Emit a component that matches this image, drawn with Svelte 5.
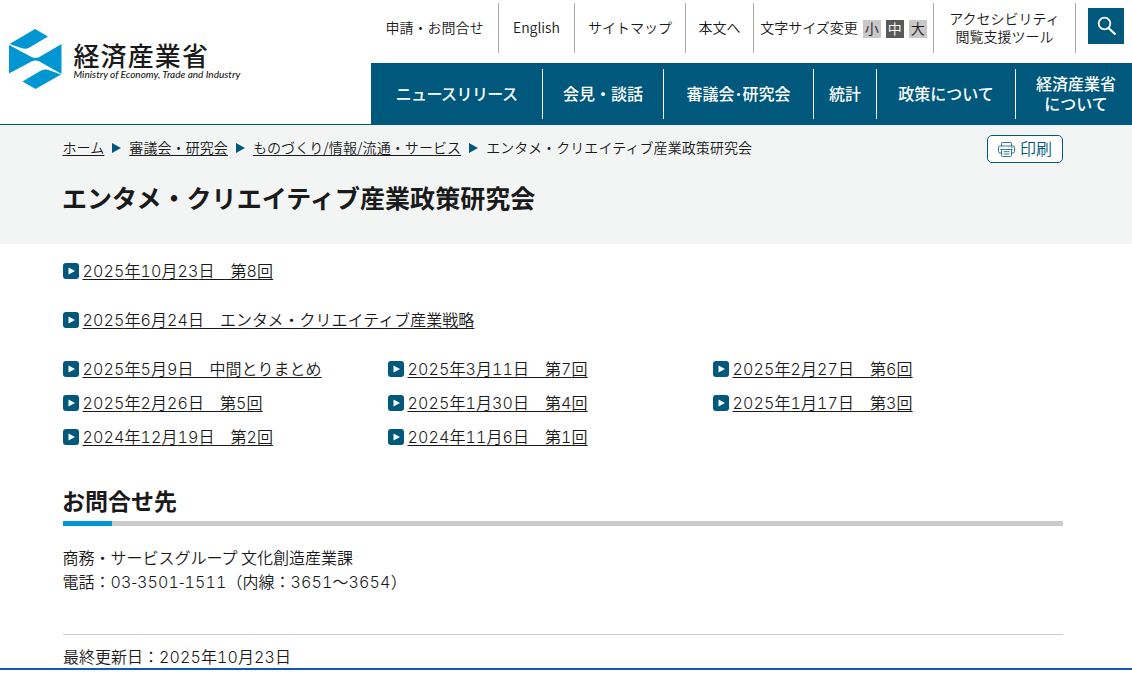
<script>
  const utilityLinks = [
    { label: '申請・お問合せ', width: 127 },
    { label: 'English', width: 75 },
    { label: 'サイトマップ', width: 110 },
    { label: '本文へ', width: 67 }
  ];

  const globalNav = [
    { lines: ['ニュースリリース'], width: 171, tight: true },
    { lines: ['会見・談話'], width: 120 },
    { lines: ['審議会･研究会'], width: 149 },
    { lines: ['統計'], width: 62 },
    { lines: ['政策について'], width: 138 },
    { lines: ['経済産業省', 'について'], width: 120 }
  ];

  const breadcrumbs = ['ホーム', '審議会・研究会', 'ものづくり/情報/流通・サービス'];
  const title = 'エンタメ・クリエイティブ産業政策研究会';

  const meetings = [
    '2025年5月9日　中間とりまとめ',
    '2025年3月11日　第7回',
    '2025年2月27日　第6回',
    '2025年2月26日　第5回',
    '2025年1月30日　第4回',
    '2025年1月17日　第3回',
    '2024年12月19日　第2回',
    '2024年11月6日　第1回'
  ];

  // split a string into digit and non-digit runs
  const runs = (text) => text.split(/(\d+)/).filter((s) => s !== '');
</script>

{#snippet mixed(text)}{#each runs(text) as run}{#if /\d/.test(run)}<span class="num">{run}</span>{:else}{run}{/if}{/each}{/snippet}

{#snippet arrowLink(text)}
  <a class="arrow-link" href="#top">
    <svg width="16" height="16" viewBox="0 0 16 16">
      <rect width="16" height="16" rx="3" fill="#00587c" />
      <path d="M5.500 4.500 12 8l-6.500 3.500z" fill="#fff" />
    </svg>
    <span class="label">{@render mixed(text)}</span>
  </a>
{/snippet}

<div class="page" id="top">
  <header>
    <a class="logo" href="#top">
      <svg width="54" height="61" viewBox="0 0 54 61">
        <g fill="#0096d2">
          <path d="M0.500 15 26 0l13 7.500-18.500 11Q17 20.500 13 19.300z" />
          <path d="M0 16 23 28.200Q26.500 29.500 30 28.200L52.500 15v30L30 32.200Q26.500 30.800 23 32.200L0 44.500z" />
          <path d="M52 45.500 26.500 60 13.500 52.500l18.500-11Q35.500 39.800 39 40.800z" />
        </g>
      </svg>
      <span class="logo-text">
        <span class="logo-ja">経済産業省</span>
        <span class="logo-en">Ministry of Economy, Trade and Industry</span>
      </span>
    </a>
    <div class="header-right">
      <ul class="utility">
        {#each utilityLinks as item}
          <li style="width: {item.width}px">{item.label}</li>
        {/each}
        <li class="text-size">
          文字サイズ変更
          <button>小</button>
          <button class="current">中</button>
          <button>大</button>
        </li>
        <li class="support">アクセシビリティ<br />閲覧支援ツール</li>
        <li class="search">
          <button aria-label="検索">
            <svg width="36" height="36" viewBox="0 0 36 36" fill="none" stroke="#fff">
              <circle cx="16.500" cy="15.500" r="5.800" stroke-width="1.800" />
              <path d="m20.500 20 7 6.500" stroke-width="2.200" />
            </svg>
          </button>
        </li>
      </ul>
      <nav>
        {#each globalNav as item}
          <a href="#top" class:tight={item.tight} style="width: {item.width}px">
            {#each item.lines as line}<span>{line}</span>{/each}
          </a>
        {/each}
      </nav>
    </div>
  </header>

  <div class="title-area">
    <div class="crumb-row">
      <ol>
        {#each breadcrumbs as crumb}
          <li>
            <a href="#top">{crumb}</a>
            <svg width="9" height="10" viewBox="0 0 9 10"><path d="M0 0 9 5 0 10z" fill="#00587c" /></svg>
          </li>
        {/each}
        <li>{title}</li>
      </ol>
      <button class="print">
        <svg width="17" height="15" viewBox="0 0 17 15" fill="none" stroke="#00587c" stroke-width="0.8">
          <path d="M3.500 4V1.200q0-.7.7-.7h8.600q.7 0 .7.700V4" />
          <path d="M3.500 11H2Q.5 11 .5 9.500v-4Q.5 4 2 4h13q1.500 0 1.500 1.500v4Q16.500 11 15 11h-1.500" />
          <path d="M2.500 7.500h12M3.500 7.500v5.800q0 1.200 1.200 1.200h7.600q1.200 0 1.200-1.200V7.500M5.500 9.700h6M5.500 12h6M13 5.700h1.500" />
        </svg>
        <span>印刷</span>
      </button>
    </div>
    <h1>{title}</h1>
  </div>

  <main>
    <p class="single">{@render arrowLink('2025年10月23日　第8回')}</p>
    <p class="single">{@render arrowLink('2025年6月24日　エンタメ・クリエイティブ産業戦略')}</p>
    <div class="meetings">
      {#each meetings as meeting}
        {@render arrowLink(meeting)}
      {/each}
    </div>

    <h2>お問合せ先</h2>
    <div class="contact">
      <p>商務・サービスグループ 文化創造産業課</p>
      <p>電話：{@render mixed('03-3501-1511')}（内線：{@render mixed('3651～3654')}）</p>
    </div>
    <p class="updated">最終更新日：{@render mixed('2025年10月23日')}</p>
  </main>
  <div class="bottom-line"></div>
</div>

<style>
  :global(body) {
    background: #fff;
    overflow: hidden;
  }
  .page {
    display: flex;
    flex-direction: column;
    width: 1132px;
    height: 674px;
    overflow: hidden;
    color: #1a1a1a;
    font-family: 'Noto Sans CJK JP', sans-serif;
    font-size: 16px;
    font-weight: 350;
    line-height: 24px;
  }
  a {
    color: inherit;
    text-decoration: none;
  }
  ul,
  ol,
  p,
  h1,
  h2 {
    margin: 0;
    padding: 0;
    list-style: none;
  }
  button {
    padding: 0;
    border: 0;
    color: inherit;
    font: inherit;
  }
  svg {
    display: block;
    flex: none;
  }
  .num {
    font-family: Inter, sans-serif;
    font-size: 16px;
    font-feature-settings: 'tnum';
    line-height: 0;
    letter-spacing: 0.15px;
  }

  header {
    display: flex;
    flex: none;
    height: 124px;
    border-bottom: 1px solid #00587c;
  }
  .logo {
    display: flex;
    box-sizing: border-box;
    width: 371px;
    padding: 29px 0 0 9px;
  }
  .logo-text {
    display: flex;
    flex-direction: column;
    padding: 12px 0 0 10.5px;
    white-space: nowrap;
  }
  .logo-ja {
    font-size: 26px;
    font-weight: 500;
    line-height: 28px;
    letter-spacing: 1.1px;
  }
  .logo-en {
    font-family: Lato, sans-serif;
    font-size: 10px;
    font-style: italic;
    font-weight: 500;
    line-height: 11px;
  }
  .header-right {
    width: 761px;
  }
  .utility {
    display: flex;
    height: 50px;
    padding: 3px 0 10px;
    font-size: 14px;
    line-height: 18px;
  }
  .utility li {
    display: flex;
    flex: none;
    align-items: center;
    justify-content: center;
    padding-bottom: 2px;
    border-right: 1px solid #aaa;
    white-space: nowrap;
  }
  .utility .text-size {
    gap: 5px;
    width: 179px;
  }
  .text-size button {
    width: 18px;
    height: 18px;
    margin-top: 3px;
    background: #c8c8c8;
    line-height: 17px;
  }
  .text-size .current {
    background: #595959;
    color: #fff;
  }
  .utility .support {
    width: 141px;
    text-align: center;
  }
  .utility .search {
    align-items: flex-start;
    width: 36px;
    padding-left: 12px;
    border: 0;
  }
  .search button {
    margin-top: 5px;
    background: #00587c;
  }
  nav {
    display: flex;
    height: 50px;
    padding: 6px 0 5px;
    background: #00587c;
    color: #fff;
    font-weight: 500;
    line-height: 20px;
  }
  nav a {
    display: flex;
    flex: none;
    flex-direction: column;
    align-items: center;
    justify-content: center;
    padding-bottom: 3px;
    border-right: 1px solid #fff;
    box-sizing: content-box;
  }
  nav a:last-child {
    width: 116px;
    border: 0;
  }
  nav .tight {
    letter-spacing: -0.6px;
  }

  .title-area {
    box-sizing: border-box;
    flex: none;
    height: 119px;
    padding: 10px 69px 0 63px;
    background: #f3f5f5;
  }
  .crumb-row {
    display: flex;
    justify-content: space-between;
    height: 28px;
    font-size: 14px;
  }
  ol,
  ol li {
    display: flex;
    align-items: center;
  }
  ol {
    height: 24px;
    margin-left: -0.5px;
    letter-spacing: 0.08px;
  }
  ol svg {
    margin: 2px 8px 0;
  }
  ol a,
  .label {
    text-decoration: underline;
    text-decoration-skip-ink: none;
    text-decoration-thickness: 1px;
    text-underline-offset: 2px;
  }
  .print {
    display: flex;
    box-sizing: border-box;
    align-items: center;
    justify-content: center;
    gap: 5px;
    width: 76px;
    height: 28px;
    border: 1px solid #00587c;
    border-radius: 5px;
    background: #fff;
    color: #00587c;
    font-size: 16px;
  }
  .print span {
    padding-bottom: 2px;
  }
  h1 {
    margin: 16px 0 0 -1px;
    font-size: 25px;
    font-weight: 700;
    line-height: 36px;
    letter-spacing: 0.06px;
  }

  main {
    box-sizing: border-box;
    flex: none;
    height: 424px;
    padding: 14px 69px 0 63px;
  }
  .single {
    margin-bottom: 25px;
  }
  .arrow-link {
    display: flex;
    align-items: center;
    gap: 3.5px;
  }
  .arrow-link svg {
    margin-top: 2px;
  }
  .meetings {
    display: grid;
    grid-template-columns: repeat(3, 325px);
    row-gap: 10px;
  }
  h2 {
    margin-top: 35px;
    padding-bottom: 4px;
    border-bottom: 5px solid;
    border-image: linear-gradient(to right, #0096d2 50px, #ccc 50px) 1;
    font-size: 23px;
    font-weight: 700;
    line-height: 34px;
    text-indent: -1px;
  }
  .contact {
    margin: 19px 0 41px;
  }
  .contact p {
    margin-left: -0.5px;
  }
  .updated {
    padding-top: 9px;
    border-top: 1px solid #ccc;
  }
  .bottom-line {
    flex: none;
    height: 2px;
    background: #105cab;
  }
</style>
